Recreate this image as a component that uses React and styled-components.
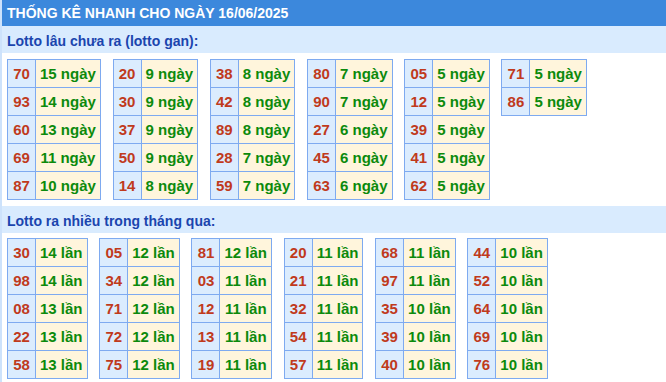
import React from "react";
import styled, { createGlobalStyle } from "styled-components";

const GlobalStyle = createGlobalStyle`
  html, body { margin: 0; padding: 0; background: #ffffff; }
  body { font-family: "Liberation Sans", Arial, sans-serif; }
`;

const Page = styled.div`
  border-left: 2px solid #cde2fb;
  min-height: 382px;
  box-sizing: border-box;
`;

const TitleBar = styled.div`
  height: 26px;
  line-height: 26px;
  padding-left: 5px;
  background: #3c88dc;
  color: #ffffff;
  font-weight: bold;
  font-size: 14px;
  white-space: nowrap;
`;

const SectionBar = styled.div`
  height: 27px;
  box-sizing: border-box;
  padding: 3px 0 0 5px;
  line-height: 24px;
  background: #d9ebfe;
  color: #1b45ae;
  font-weight: bold;
  font-size: 14px;
`;

const TableRow = styled.div`
  display: flex;
  align-items: flex-start;
  gap: 11.7px;
  padding: ${(p) => p.$pad};
`;

const Table = styled.table`
  border-collapse: collapse;
  border: 1px solid #7eaaf0;
`;

const Cell = styled.td`
  border: 1px solid #7eaaf0;
  height: 28px;
  box-sizing: border-box;
  padding: 0 4px;
  text-align: center;
  font-family: "Liberation Sans", Arial, sans-serif;
  font-weight: bold;
  font-size: 15px;
  white-space: nowrap;
  background: #fff5dc;
  color: #0c8a0c;
`;

const NumCell = styled(Cell)`
  width: 28px;
  padding: 0;
  background: #dbecfe;
  color: #c03a1c;
`;

const gan = [
  [["70", 15], ["93", 14], ["60", 13], ["69", 11], ["87", 10]],
  [["20", 9], ["30", 9], ["37", 9], ["50", 9], ["14", 8]],
  [["38", 8], ["42", 8], ["89", 8], ["28", 7], ["59", 7]],
  [["80", 7], ["90", 7], ["27", 6], ["45", 6], ["63", 6]],
  [["05", 5], ["12", 5], ["39", 5], ["41", 5], ["62", 5]],
  [["71", 5], ["86", 5]],
];

const nhieu = [
  [["30", 14], ["98", 14], ["08", 13], ["22", 13], ["58", 13]],
  [["05", 12], ["34", 12], ["71", 12], ["72", 12], ["75", 12]],
  [["81", 12], ["03", 11], ["12", 11], ["13", 11], ["19", 11]],
  [["20", 11], ["21", 11], ["32", 11], ["54", 11], ["57", 11]],
  [["68", 11], ["97", 11], ["35", 10], ["39", 10], ["40", 10]],
  [["44", 10], ["52", 10], ["64", 10], ["69", 10], ["76", 10]],
];

function Block({ data, unit, pad }) {
  return (
    <TableRow $pad={pad}>
      {data.map((rows, i) => (
        <Table key={i}>
          <tbody>
            {rows.map(([n, c]) => (
              <tr key={n}>
                <NumCell>{n}</NumCell>
                <Cell>{c} {unit}</Cell>
              </tr>
            ))}
          </tbody>
        </Table>
      ))}
    </TableRow>
  );
}

export default function App() {
  return (
    <Page>
      <GlobalStyle />
      <TitleBar>THỐNG KÊ NHANH CHO NGÀY 16/06/2025</TitleBar>
      <SectionBar>Lotto lâu chưa ra (lotto gan):</SectionBar>
      <Block data={gan} unit="ngày" pad="6px 0 6px 5px" />
      <SectionBar>Lotto ra nhiều trong tháng qua:</SectionBar>
      <Block data={nhieu} unit="lần" pad="5px 0 0 5px" />
    </Page>
  );
}
